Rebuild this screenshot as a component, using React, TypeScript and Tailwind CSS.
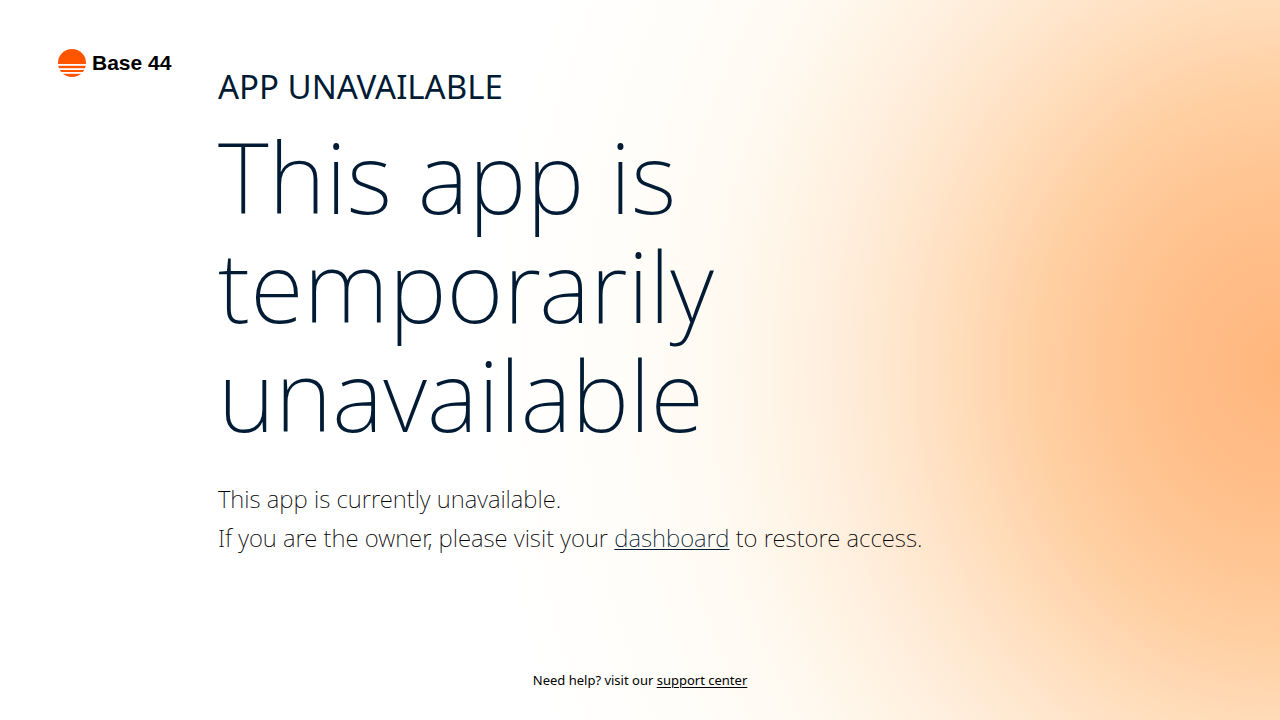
function Logo() {
  return (
    <a href="/" className="flex items-center gap-1.5 text-black">
      <svg viewBox="0 0 28 28" className="size-7" aria-hidden="true">
        <defs>
          <clipPath id="sun">
            <circle cx="14" cy="14" r="14" />
          </clipPath>
        </defs>
        <g clipPath="url(#sun)" fill="#ff5500">
          <rect width="28" height="15" />
          <rect y="16.8" width="28" height="2.4" />
          <rect y="21" width="28" height="2" />
          <rect y="24.8" width="28" height="3.2" />
        </g>
      </svg>
      <span className="font-['Liberation_Sans',Arial,sans-serif] text-[21px] leading-7 font-bold">
        Base 44
      </span>
    </a>
  );
}

export default function App() {
  return (
    <div className="flex min-h-screen flex-col bg-white bg-[radial-gradient(ellipse_800px_910px_at_100%_51%,#ffb67c_0%,#ffbd88_12%,#ffc694_22%,#ffcfa2_30%,#ffdbb8_39%,#ffe5ca_47%,#ffebd7_53%,#fff3e4_61%,#fff9f0_70%,#fffdf9_82%,#ffffff_100%)] font-['Noto_Sans',sans-serif]">
      <div className="flex flex-1 items-start px-[58px] pt-12">
        <header className="w-40 shrink-0 pt-px">
          <Logo />
        </header>

        <main className="min-w-0 pt-4">
          <p className="text-[33px] leading-[46px] text-[#001b33] uppercase">
            App unavailable
          </p>
          <h1 className="mt-3 max-w-[600px] text-[98px] leading-[109px] font-extralight text-[#001b33]">
            This app is temporarily unavailable
          </h1>
          <div className="mt-[30px] text-2xl leading-[39px] font-extralight text-black">
            <p>This app is currently unavailable.</p>
            <p>
              If you are the owner, please visit your{" "}
              <a
                href="#dashboard"
                className="text-[#001b33] underline decoration-1 underline-offset-2"
              >
                dashboard
              </a>{" "}
              to restore access.
            </p>
          </div>
        </main>
      </div>

      <footer className="pb-7 text-center text-[13px] leading-6 text-black">
        Need help? visit our{" "}
        <a href="#support" className="underline underline-offset-2">
          support center
        </a>
      </footer>
    </div>
  );
}
